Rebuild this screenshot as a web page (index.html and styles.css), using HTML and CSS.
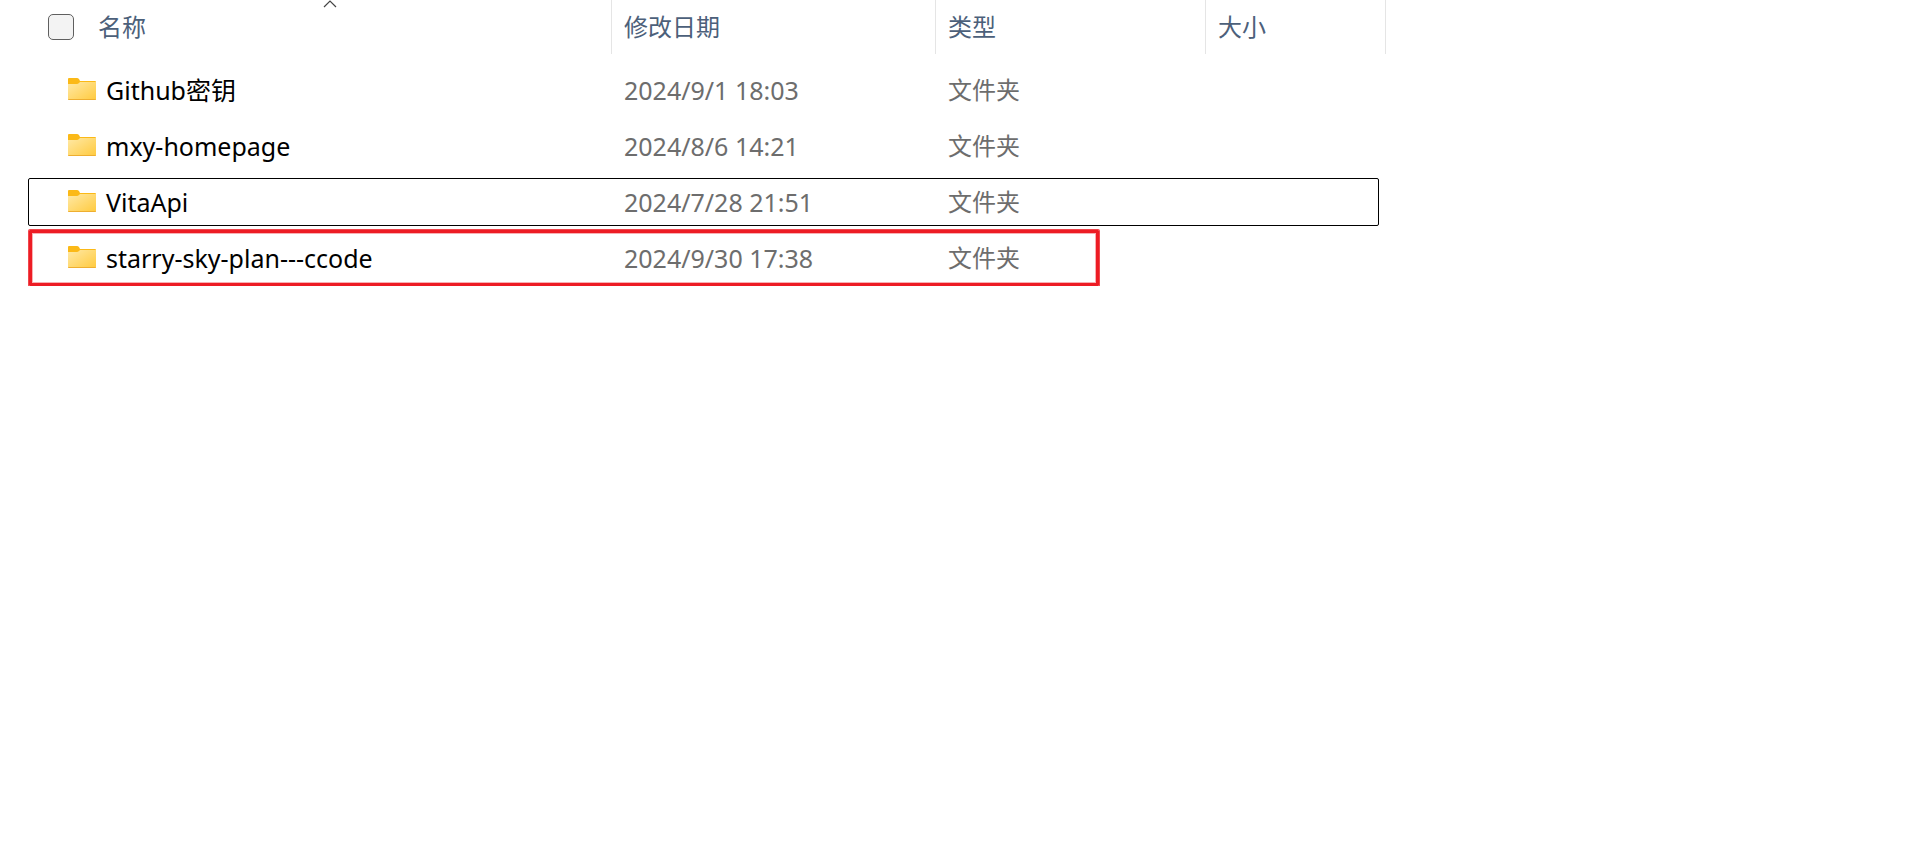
FILE: index.html
```html
<!DOCTYPE html>
<html lang="zh-CN">
<head>
  <meta charset="UTF-8" />
  <meta name="viewport" content="width=device-width, initial-scale=1.0" />
  <title>文件夹</title>
  <link rel="stylesheet" href="styles.css">
</head>
<body>
  <!-- Shared folder icon -->
  <svg class="sprite" aria-hidden="true">
    <defs>
      <linearGradient id="folderFront" x1="0" y1="0" x2="1" y2="1">
        <stop offset="0" stop-color="#ffe9a6" />
        <stop offset="1" stop-color="#ffca3e" />
      </linearGradient>
    </defs>
    <symbol id="folder" viewBox="0 0 28 22">
      <path d="M0 1Q0 0 1 0H9Q10 0 11 1L12 3H27Q28 3 28 4V12H0Z" fill="#fbb917" />
      <path d="M0 6H9Q10 6 11 5L12 4H28V21Q28 22 27 22H1Q0 22 0 21Z" fill="url(#folderFront)" />
      <path d="M0 21H28Q28 22 27 22H1Q0 22 0 21Z" fill="#eeae30" />
    </symbol>
  </svg>

  <main class="explorer">
    <table class="file-list">
      <colgroup>
        <col>
        <col class="col-date">
        <col class="col-type">
        <col class="col-size">
      </colgroup>
      <thead>
        <tr>
          <th class="name-head" aria-sort="ascending">
            <svg class="sort-arrow" width="14" height="8" viewBox="0 0 14 8" aria-hidden="true">
              <path d="M1 7L7 1L13 7" fill="none" stroke="#444" stroke-width="1.2" />
            </svg>
            <div class="head-content">
              <input type="checkbox" id="selectAll" aria-label="全选">
              <button type="button">名称</button>
            </div>
          </th>
          <th><button type="button">修改日期</button></th>
          <th><button type="button">类型</button></th>
          <th><button type="button">大小</button></th>
        </tr>
      </thead>
      <tbody>
        <tr>
          <td class="name"><div class="file-name"><svg class="icon"><use href="#folder" /></svg>Github密钥</div></td>
          <td class="date">2024/9/1 18:03</td>
          <td>文件夹</td>
          <td></td>
        </tr>
        <tr>
          <td class="name"><div class="file-name"><svg class="icon"><use href="#folder" /></svg>mxy-homepage</div></td>
          <td class="date">2024/8/6 14:21</td>
          <td>文件夹</td>
          <td></td>
        </tr>
        <tr class="focused">
          <td class="name"><div class="file-name"><svg class="icon"><use href="#folder" /></svg>VitaApi</div></td>
          <td class="date">2024/7/28 21:51</td>
          <td>文件夹</td>
          <td></td>
        </tr>
        <tr class="marked">
          <td class="name"><div class="file-name"><svg class="icon"><use href="#folder" /></svg>starry-sky-plan---ccode</div></td>
          <td class="date">2024/9/30 17:38</td>
          <td>文件夹</td>
          <td></td>
        </tr>
      </tbody>
    </table>
  </main>
</body>
</html>
```
FILE: styles.css
```css
body {
  margin: 0;
  background: #fff;
  color: #6d6d6d;
  font-family: "Segoe UI", "Noto Sans", "Noto Sans CJK SC", sans-serif;
  font-size: 24px;
  line-height: 32px;
}

.sprite {
  position: absolute;
  width: 0;
  height: 0;
}

.explorer {
  max-width: 1386px;
}

.file-list {
  width: 100%;
  table-layout: fixed;
  border-collapse: separate;
  border-spacing: 0;
}

.col-date {
  width: 324px;
}

.col-type {
  width: 270px;
}

.col-size {
  width: 180px;
}

th {
  height: 54px;
  padding: 0 12px;
  box-sizing: border-box;
  border-right: 1px solid #e5e5e5;
  text-align: left;
  font-weight: normal;
}

th button {
  display: block;
  padding: 0;
  border: none;
  background: none;
  color: #4c607a;
  font: inherit;
  cursor: pointer;
}

.name-head {
  position: relative;
  padding-left: 48px;
}

.head-content {
  display: flex;
  align-items: center;
  gap: 24px;
}

.sort-arrow {
  position: absolute;
  top: 0;
  left: 48px;
  right: 0;
  margin: 0 auto;
}

input[type="checkbox"] {
  appearance: none;
  width: 26px;
  height: 26px;
  margin: 0;
  border: 1px solid #5f5f5f;
  border-radius: 5px;
  background: #f3f3f3;
}

/* space between the header and the first row */
tbody::before {
  content: "";
  display: block;
  height: 8px;
}

tbody tr {
  position: relative;
}

td {
  height: 56px;
  padding: 0 12px;
  white-space: nowrap;
}

.name,
.date {
  font-size: 25px;
}

.name {
  padding-left: 68px;
}

.file-name {
  display: flex;
  align-items: center;
  gap: 10px;
  color: #000;
}

.icon {
  flex: none;
  width: 28px;
  height: 22px;
  margin-bottom: 2px;
}

.focused .name::after,
.marked .name::after {
  content: "";
  position: absolute;
  pointer-events: none;
}

.focused .name::after {
  inset: 4px 7px 4px 28px;
  border: 1px solid #000;
  border-radius: 2px;
}

.marked .name::after {
  inset: 0 287px 0 29px;
  border: 3px solid #ed1c24;
  border-radius: 1px;
  box-shadow: 0 0 0 1px #f0474d, inset 0 0 0 1px #f8b0b3;
}
```
